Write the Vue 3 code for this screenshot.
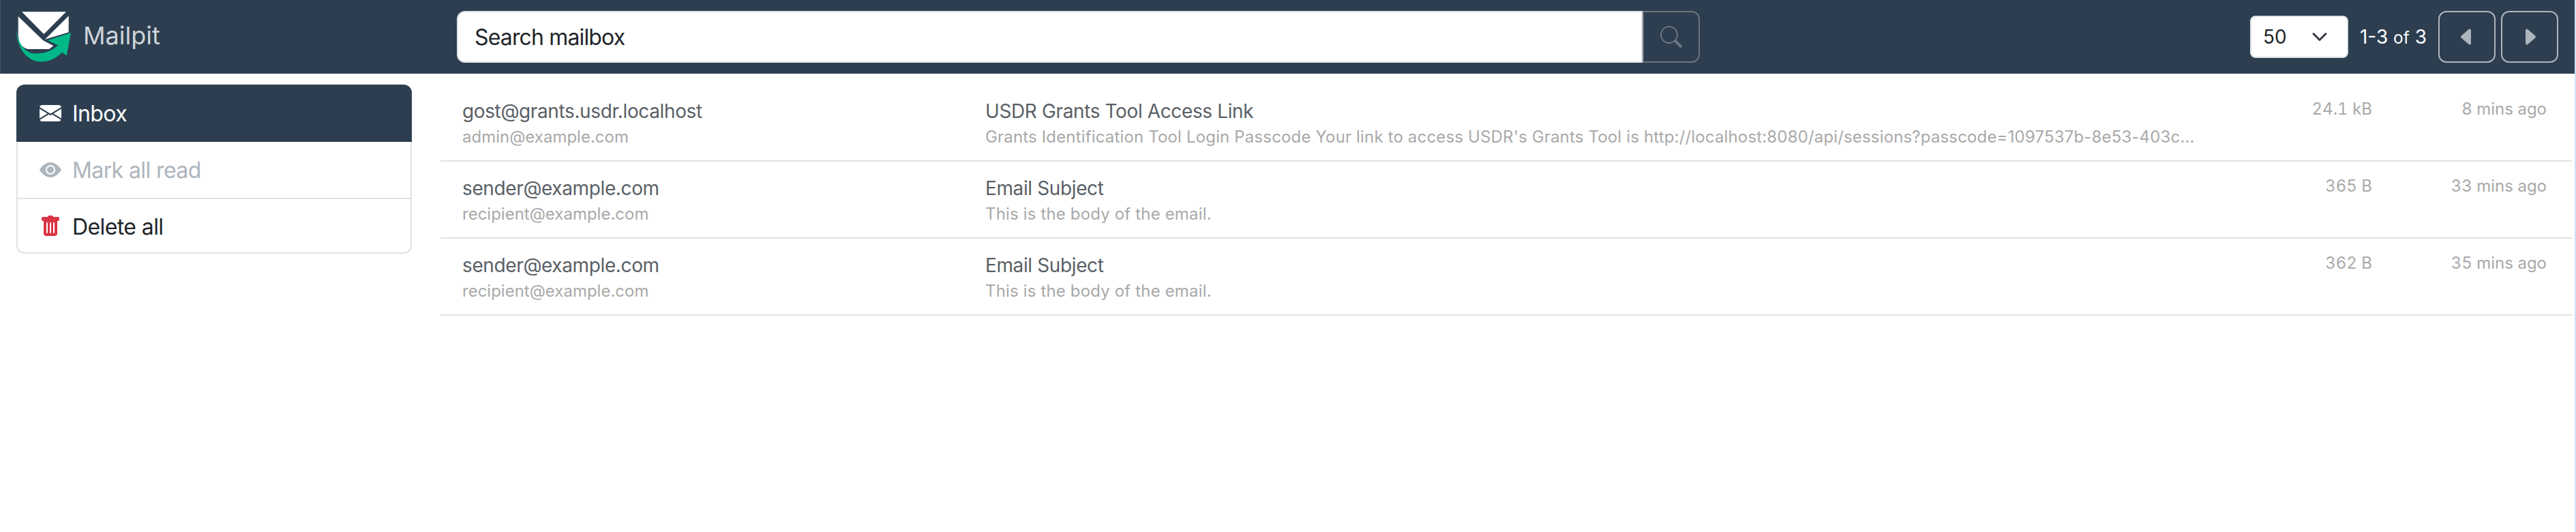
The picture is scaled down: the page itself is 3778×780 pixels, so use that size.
<script setup>
const rows = [
  { from: 'gost@grants.usdr.localhost', to: 'admin@example.com', subject: 'USDR Grants Tool Access Link', preview: "Grants Identification Tool Login Passcode Your link to access USDR's Grants Tool is http://localhost:8080/api/sessions?passcode=1097537b-8e53-403c...", size: '24.1 kB', age: '8 mins ago' },
  { from: 'sender@example.com', to: 'recipient@example.com', subject: 'Email Subject', preview: 'This is the body of the email.', size: '365 B', age: '33 mins ago' },
  { from: 'sender@example.com', to: 'recipient@example.com', subject: 'Email Subject', preview: 'This is the body of the email.', size: '362 B', age: '35 mins ago' },
]
</script>

<template>
  <div class="page">
    <header class="nav">
      <div class="brand">
        <svg class="logo" viewBox="0 0 80 74" width="80" height="74">
          <path fill="#00b787" d="M80 31 73.7 64.7 67.3 59.7C58 69 47 73.5 36 73.5 14 73.5-1 50 .3 24.7 1 45 12 61 28 61.5 40 62 52 58 61 49.5L46 42Z"/>
          <path fill="#fff" d="M8 .3H73L40.3 33Z"/>
          <path fill="#fff" d="M2.7 7 39.3 42.3 54.3 50.3 48 55H19C9 55 2.7 45 2.7 33Z"/>
          <path fill="#fff" d="M76.7 6.3V30.3L42 40.7Z"/>
        </svg>
        <span class="brand-name">Mailpit</span>
      </div>
      <div class="search">
        <div class="search-input">Search mailbox</div>
        <div class="search-btn">
          <svg viewBox="0 0 16 16" width="32" height="32" fill="#6c757d"><path d="M11.742 10.344a6.5 6.5 0 1 0-1.397 1.398l3.85 3.85a1 1 0 0 0 1.415-1.414zM12 6.5a5.5 5.5 0 1 1-11 0 5.5 5.5 0 0 1 11 0"/></svg>
        </div>
      </div>
      <div class="pager">
        <div class="select">
          <span>50</span>
          <svg viewBox="0 0 16 16" width="24" height="24" fill="none" stroke="#343a40" stroke-width="2" stroke-linecap="round" stroke-linejoin="round"><path d="m2 5 6 6 6-6"/></svg>
        </div>
        <span class="count">1-3 <small>of</small> 3</span>
        <div class="page-btn">
          <svg viewBox="0 0 16 16" width="32" height="32" fill="#adb5bd"><path d="m3.86 8.753 5.482 4.796c.646.566 1.658.106 1.658-.753V3.204a1 1 0 0 0-1.659-.753l-5.48 4.796a1 1 0 0 0 0 1.506z"/></svg>
        </div>
        <div class="page-btn">
          <svg viewBox="0 0 16 16" width="32" height="32" fill="#adb5bd"><path d="m12.14 8.753-5.482 4.796c-.646.566-1.658.106-1.658-.753V3.204a1 1 0 0 1 1.659-.753l5.48 4.796a1 1 0 0 1 0 1.506z"/></svg>
        </div>
      </div>
    </header>
    <main class="body">
      <aside class="menu">
        <div class="item active">
          <svg viewBox="0 0 16 16" width="32" height="32" fill="#fff"><path d="M.05 3.555A2 2 0 0 1 2 2h12a2 2 0 0 1 1.95 1.555L8 8.414zM0 4.697v7.104l5.803-3.558zM6.761 8.83l-6.57 4.027A2 2 0 0 0 2 14h12a2 2 0 0 0 1.808-1.144l-6.57-4.027L8 9.586zm3.436-.586L16 11.801V4.697z"/></svg>
          <span>Inbox</span>
        </div>
        <div class="item muted">
          <svg viewBox="0 0 16 16" width="32" height="32" fill="#adb5bd"><path d="M10.5 8a2.5 2.5 0 1 1-5 0 2.5 2.5 0 0 1 5 0"/><path d="M0 8s3-5.5 8-5.5S16 8 16 8s-3 5.5-8 5.5S0 8 0 8m8 3.5a3.5 3.5 0 1 0 0-7 3.5 3.5 0 0 0 0 7"/></svg>
          <span>Mark all read</span>
        </div>
        <div class="item last">
          <svg viewBox="0 0 16 16" width="32" height="32" fill="#dc3545"><path d="M2.5 1a1 1 0 0 0-1 1v1a1 1 0 0 0 1 1H3v9a2 2 0 0 0 2 2h6a2 2 0 0 0 2-2V4h.5a1 1 0 0 0 1-1V2a1 1 0 0 0-1-1H10a1 1 0 0 0-1-1H7a1 1 0 0 0-1 1zm3 4a.5.5 0 0 1 .5.5v7a.5.5 0 0 1-1 0v-7a.5.5 0 0 1 .5-.5M8 5a.5.5 0 0 1 .5.5v7a.5.5 0 0 1-1 0v-7A.5.5 0 0 1 8 5m3 .5v7a.5.5 0 0 1-1 0v-7a.5.5 0 0 1 1 0"/></svg>
          <span>Delete all</span>
        </div>
      </aside>
      <section class="list">
        <div v-for="(r, i) in rows" :key="i" class="row">
          <div class="cell">
            <div class="main">{{ r.from }}</div>
            <div class="sub">{{ r.to }}</div>
          </div>
          <div class="cell">
            <div class="main">{{ r.subject }}</div>
            <div class="sub preview">{{ r.preview }}</div>
          </div>
          <div class="meta">{{ r.size }}</div>
          <div class="meta">{{ r.age }}</div>
        </div>
      </section>
    </main>
  </div>
</template>

<style>
html, body { margin: 0; background: #fff; }
</style>

<style scoped>
.page { width: 3778px; height: 780px; box-sizing: border-box; border-right: 2px solid #d0e2fd; font-family: Inter, "Liberation Sans", sans-serif; background: #fff; overflow: hidden; }
.nav { width: 3776px; height: 108px; box-sizing: border-box; background: #2c3e50; display: flex; align-items: center; padding: 0 24px; box-shadow: inset 1px 0 0 #46566a; }
.brand { width: 646px; display: flex; align-items: center; gap: 18px; align-self: flex-start; padding-top: 17px; box-sizing: border-box; }
.logo { display: block; flex: none; overflow: visible; }
.brand-name { color: #ced4da; font-size: 36px; line-height: 44px; margin-top: -4px; }
.search { display: flex; height: 76px; width: 1823px; }
.search-input { width: 1739px; box-sizing: border-box; background: #fff; border-radius: 12px 0 0 12px; border: 2px solid #dee2e6; padding: 0 24px; display: flex; align-items: center; font-size: 32px; letter-spacing: -0.85px; color: #212529; }
.search-btn { width: 84px; box-sizing: border-box; border: 2px solid #6c757d; border-radius: 0 12px 12px 0; display: flex; align-items: center; justify-content: center; }
.pager { margin-left: auto; display: flex; align-items: center; }
.select { width: 144px; height: 62px; box-sizing: border-box; background: #fff; border: 2px solid #dee2e6; border-radius: 8px; display: flex; align-items: center; justify-content: space-between; padding: 0 28px 0 17px; font-size: 28px; color: #212529; }
.count { color: #fff; font-size: 28px; margin: 0 17px; white-space: nowrap; }
.count small { font-size: 24.5px; }
.page-btn { width: 84px; height: 76px; box-sizing: border-box; border: 2px solid #adb5bd; border-radius: 12px; display: flex; align-items: center; justify-content: center; }
.page-btn + .page-btn { margin-left: 8px; }
.body { display: flex; padding-top: 16px; }
.menu { margin-left: 24px; width: 580px; height: 248px; box-sizing: border-box; border: 2px solid #dee2e6; border-top: 0; border-radius: 12px; font-size: 32px; letter-spacing: -0.6px; color: #212529; flex: none; }
.item { height: 82px; display: flex; align-items: center; gap: 16px; padding-left: 32px; box-sizing: border-box; border-top: 2px solid #dee2e6; }
.item.active { background: #2c3e50; color: #fff; height: 84px; margin: 0 -2px; padding-left: 34px; border-top: 0; border-radius: 12px 12px 0 0; }
.item.muted { border-top: 0; color: #adb5bd; }
.list { margin-left: 42px; width: 3126px; }
.row { display: grid; grid-template-columns: 767px 1812px 254px 256px; height: 113px; box-sizing: border-box; border-bottom: 2px solid #dee2e6; padding-right: 37px; }
.cell { padding-left: 32px; min-width: 0; }
.main { font-size: 28px; letter-spacing: -0.38px; line-height: 40px; color: #5a6066; padding-top: 19px; }
.sub { font-size: 24px; line-height: 34px; color: #a9a9a9; white-space: nowrap; padding-top: 1px; }
.preview { letter-spacing: 0.16px; }
.meta { font-size: 24px; line-height: 34px; color: #a9a9a9; text-align: right; padding-top: 19px; font-variant-numeric: tabular-nums; }
</style>
